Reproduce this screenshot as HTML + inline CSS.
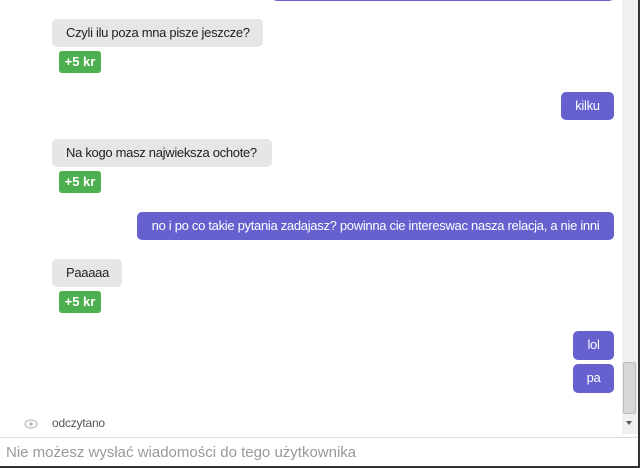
<!DOCTYPE html>
<html><head><meta charset="utf-8"><style>
body{margin:0;width:640px;height:468px;background:#fff;position:relative;overflow:hidden;font-family:"Liberation Sans",Arial,sans-serif;}
.b{position:absolute;border-radius:5px;font-size:13px;letter-spacing:-0.3px;line-height:28px;height:28px;box-sizing:border-box;padding:0 14px;white-space:nowrap}
.g{background:#e6e6e6;color:#222;left:52px}
.p{background:#6661cf;color:#fff;text-align:center}
.k{position:absolute;left:59px;width:42px;height:22px;line-height:22px;background:#4caf50;color:#fff;font-weight:bold;font-size:13px;text-align:center;border-radius:3px}
</style></head><body>
<div class="b p" style="left:272px;width:342px;top:-27px"></div>
<div class="b g" style="top:19px;width:211px">Czyli ilu poza mna pisze jeszcze?</div>
<div class="k" style="top:51px">+5 kr</div>
<div class="b p" style="left:561px;width:53px;top:92px;padding:0">kilku</div>
<div class="b g" style="top:139px;width:220px">Na kogo masz najwieksza ochote?</div>
<div class="k" style="top:171px">+5 kr</div>
<div class="b p" style="left:137px;width:477px;top:212px;padding:0">no i po co takie pytania zadajasz? powinna cie intereswac nasza relacja, a nie inni</div>
<div class="b g" style="top:259px;width:70px">Paaaaa</div>
<div class="k" style="top:291px">+5 kr</div>
<div class="b p" style="left:573px;width:41px;top:331px;height:29px;padding:0">lol</div>
<div class="b p" style="left:573px;width:41px;top:364px;height:29px;padding:0">pa</div>
<svg style="position:absolute;left:24px;top:418px" width="14" height="12" viewBox="0 0 14 12"><ellipse cx="7" cy="6" rx="6" ry="4" fill="none" stroke="#bbb" stroke-width="1.2"/><circle cx="7" cy="6" r="1.8" fill="#bbb"/></svg>
<div style="position:absolute;left:52px;top:416px;font-size:12px;color:#555;letter-spacing:-0.2px">odczytano</div>
<div style="position:absolute;left:622px;top:0;width:16px;height:434px;background:#f0f0f0"></div>
<div style="position:absolute;left:623px;top:362px;width:13px;height:52px;background:#d8d8d8;border:1px solid #bbb;box-sizing:border-box;border-radius:2px"></div>
<div style="position:absolute;left:626px;top:421px;width:0;height:0;border-left:3px solid transparent;border-right:3px solid transparent;border-top:4px solid #555"></div>
<div style="position:absolute;left:0;top:437px;width:638px;height:1px;background:#ddd"></div>
<div style="position:absolute;left:6px;top:444px;font-size:15px;color:#999">Nie możesz wysłać wiadomości do tego użytkownika</div>
<div style="position:absolute;left:638px;top:0;width:2px;height:468px;background:#333"></div>
<div style="position:absolute;left:0;top:466px;width:640px;height:2px;background:#333"></div>
</body></html>
